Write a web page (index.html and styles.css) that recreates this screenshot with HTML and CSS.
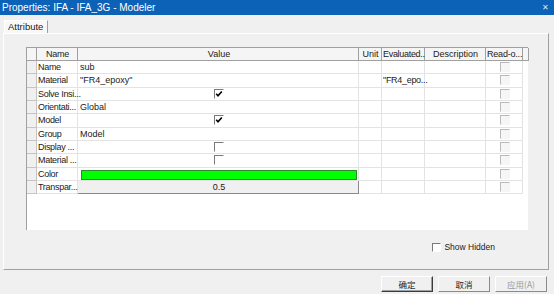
FILE: index.html
```html
<!DOCTYPE html>
<html lang="en">
<head>
    <meta charset="UTF-8">
    <meta name="viewport" content="width=device-width, initial-scale=1.0">
    <title>Properties</title>
    <link rel="stylesheet" href="styles.css">
</head>
<body>
    <div class="titlebar">
        <span class="title">Properties: IFA - IFA_3G - Modeler</span>
        <span class="close">✕</span>
    </div>
    <div class="content">
        <div class="tabs">
            <div class="tab">Attribute</div>
        </div>
        <div class="panel">
            <div class="grid">
                <div class="row head">
                    <div class="cell c0"></div>
                    <div class="cell c1">Name</div>
                    <div class="cell c2">Value</div>
                    <div class="cell c3">Unit</div>
                    <div class="cell c4 left">Evaluated...</div>
                    <div class="cell c5">Description</div>
                    <div class="cell c6 left">Read-o...</div>
                    <div class="cell c7"></div>
                </div>
                <div class="row">
                    <div class="cell c0"></div>
                    <div class="cell c1">Name</div>
                    <div class="cell c2">sub</div>
                    <div class="cell c3"></div>
                    <div class="cell c4"></div>
                    <div class="cell c5"></div>
                    <div class="cell c6 center"><span class="chk off"></span></div>
                </div>
                <div class="row">
                    <div class="cell c0"></div>
                    <div class="cell c1">Material</div>
                    <div class="cell c2">"FR4_epoxy"</div>
                    <div class="cell c3"></div>
                    <div class="cell c4">"FR4_epo...</div>
                    <div class="cell c5"></div>
                    <div class="cell c6 center"><span class="chk off"></span></div>
                </div>
                <div class="row">
                    <div class="cell c0"></div>
                    <div class="cell c1">Solve Insi...</div>
                    <div class="cell c2 center"><span class="chk"><svg viewBox="0 0 8 8"><path d="M1.2 3.8 L3 5.8 L6.8 1.4" /></svg></span></div>
                    <div class="cell c3"></div>
                    <div class="cell c4"></div>
                    <div class="cell c5"></div>
                    <div class="cell c6 center"><span class="chk off"></span></div>
                </div>
                <div class="row">
                    <div class="cell c0"></div>
                    <div class="cell c1">Orientati...</div>
                    <div class="cell c2">Global</div>
                    <div class="cell c3"></div>
                    <div class="cell c4"></div>
                    <div class="cell c5"></div>
                    <div class="cell c6 center"><span class="chk off"></span></div>
                </div>
                <div class="row">
                    <div class="cell c0"></div>
                    <div class="cell c1">Model</div>
                    <div class="cell c2 center"><span class="chk"><svg viewBox="0 0 8 8"><path d="M1.2 3.8 L3 5.8 L6.8 1.4" /></svg></span></div>
                    <div class="cell c3"></div>
                    <div class="cell c4"></div>
                    <div class="cell c5"></div>
                    <div class="cell c6 center"><span class="chk off"></span></div>
                </div>
                <div class="row">
                    <div class="cell c0"></div>
                    <div class="cell c1">Group</div>
                    <div class="cell c2">Model</div>
                    <div class="cell c3"></div>
                    <div class="cell c4"></div>
                    <div class="cell c5"></div>
                    <div class="cell c6 center"><span class="chk off"></span></div>
                </div>
                <div class="row">
                    <div class="cell c0"></div>
                    <div class="cell c1">Display ...</div>
                    <div class="cell c2 center"><span class="chk"></span></div>
                    <div class="cell c3"></div>
                    <div class="cell c4"></div>
                    <div class="cell c5"></div>
                    <div class="cell c6 center"><span class="chk off"></span></div>
                </div>
                <div class="row">
                    <div class="cell c0"></div>
                    <div class="cell c1">Material ...</div>
                    <div class="cell c2 center"><span class="chk"></span></div>
                    <div class="cell c3"></div>
                    <div class="cell c4"></div>
                    <div class="cell c5"></div>
                    <div class="cell c6 center"><span class="chk off"></span></div>
                </div>
                <div class="row">
                    <div class="cell c0"></div>
                    <div class="cell c1">Color</div>
                    <div class="cell c2 color"><div class="swatch"></div></div>
                    <div class="cell c3"></div>
                    <div class="cell c4"></div>
                    <div class="cell c5"></div>
                    <div class="cell c6 center"><span class="chk off"></span></div>
                </div>
                <div class="row">
                    <div class="cell c0"></div>
                    <div class="cell c1">Transpar...</div>
                    <div class="cell c2 slider">0.5</div>
                    <div class="cell c3"></div>
                    <div class="cell c4"></div>
                    <div class="cell c5"></div>
                    <div class="cell c6 center"><span class="chk off"></span></div>
                </div>
            </div>
            <div class="options">
                <span class="box"></span>
                <span>Show Hidden</span>
            </div>
        </div>
        <div class="actions">
            <button class="btn default">确定</button>
            <button class="btn">取消</button>
            <button class="btn disabled">应用(A)</button>
        </div>
    </div>
</body>
</html>
```

FILE: styles.css
```css
body {
    margin: 0;
    width: 554px;
    height: 294px;
    overflow: hidden;
    background: #f0f0f0;
    color: #1a1a1a;
    font-family: "Liberation Sans Narrow", "Liberation Sans", "Noto Sans CJK SC", sans-serif;
    font-size: 9px;
}

.titlebar {
    height: 15px;
    background: #0c62b6;
    color: #fff;
    display: flex;
    align-items: center;
    justify-content: space-between;
    padding: 0 5px 0 2px;
}
.title {
    font-size: 10px;
}
.close {
    font-size: 8px;
    color: #dbe6f3;
}

.content {
    padding: 0 5px 0 3px;
}

.tabs {
    height: 18px;
    display: flex;
    align-items: flex-end;
    padding-left: 1px;
}
.tab {
    height: 13px;
    box-sizing: border-box;
    padding: 0 4px 0 3px;
    background: #f8f8f8;
    border-top: 1px solid #fff;
    border-left: 1px solid #fff;
    border-right: 1px solid #a0a0a0;
    line-height: 12px;
    font-size: 9.5px;
}

.panel {
    height: 237px;
    box-sizing: border-box;
    border: 1px solid;
    border-color: #fff #a0a0a0 #a0a0a0 #fff;
    padding: 13px 0 0 22px;
}

.grid {
    width: 502px;
    height: 183px;
    box-sizing: border-box;
    background: #fff;
    border-top: 1px solid #a0a0a0;
    border-left: 1px solid #a0a0a0;
}

.row {
    display: flex;
    height: 13.33px;
}
.row.head {
    height: 13px;
}

.cell {
    box-sizing: border-box;
    flex: none;
    border-right: 1px solid #e3e3e3;
    border-bottom: 1px solid #e3e3e3;
    padding: 0 0 0 1px;
    white-space: nowrap;
    line-height: 12px;
}
.c0 { width: 10px; background: #f0f0f0; border-color: #c4c4c4; }
.c1 { width: 41px; letter-spacing: -0.3px; }
.c2 { width: 281px; padding-left: 2px; }
.c3 { width: 23px; }
.c4 { width: 43px; letter-spacing: -0.3px; }
.c5 { width: 61px; }
.c6 { width: 37px; letter-spacing: -0.2px; }
.c7 { width: 6px; }

.head .cell {
    background: #f5f5f5;
    border-right-color: #a0a0a0;
    border-bottom-color: #a0a0a0;
    text-align: center;
}
.head .cell.left {
    text-align: left;
}

.center {
    display: flex;
    align-items: center;
    justify-content: center;
}

.chk {
    width: 10px;
    height: 10px;
    box-sizing: border-box;
    background: #fff;
    border: 1px solid;
    border-color: #7a7a7a #fff #fff #7a7a7a;
    display: flex;
}
.chk svg {
    width: 8px;
    height: 8px;
}
.chk path {
    fill: none;
    stroke: #000;
    stroke-width: 1.6;
}
.chk.off {
    background: #f6f6f6;
    border-color: #b9b9b9 #f6f6f6 #f6f6f6 #b9b9b9;
}

.c2.color {
    padding: 2px 1px 1px 3px;
}
.swatch {
    height: 10px;
    box-sizing: border-box;
    background: #00ff00;
    border: 1px solid #2b8a2b;
}

.slider {
    background: #f0f0f0;
    border-right: 1px solid #8a8a8a;
    border-bottom: 1px solid #8a8a8a;
    text-align: center;
}

.options {
    display: flex;
    justify-content: flex-end;
    align-items: center;
    gap: 3px;
    margin-top: 12px;
    padding-right: 53px;
    font-size: 8.5px;
}
.box {
    width: 9px;
    height: 9px;
    box-sizing: border-box;
    background: #fff;
    border: 1px solid;
    border-color: #7a7a7a #fff #fff #7a7a7a;
}

.actions {
    display: flex;
    justify-content: flex-end;
    gap: 5px;
    margin-top: 6px;
    padding-right: 2px;
}
.btn {
    width: 52px;
    height: 16px;
    padding: 0;
    background: #f0f0f0;
    border: 1px solid;
    border-color: #fff #8a8a8a #8a8a8a #fff;
    font-family: "Noto Sans CJK SC", sans-serif;
    font-size: 8.5px;
    color: #1e1e1e;
}
.btn.default {
    border-color: #fff #3c3c3c #3c3c3c #fff;
    box-shadow: inset -1px -1px 0 #a0a0a0;
}
.btn.disabled {
    color: #9a9a9a;
}
```
